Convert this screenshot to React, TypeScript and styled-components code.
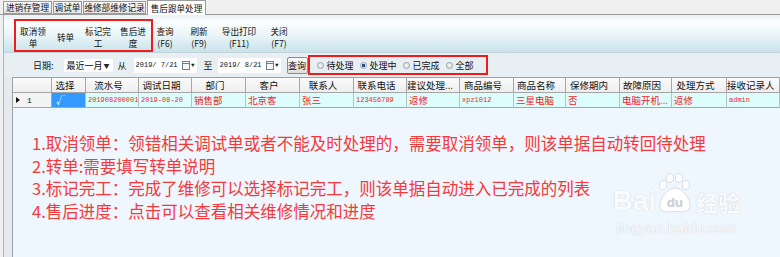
import React from "react";
import styled, { createGlobalStyle } from "styled-components";

const Global = createGlobalStyle`
  html, body { margin: 0; padding: 0; }
  body {
    width: 780px; height: 257px; overflow: hidden;
    background: #eef0f2;
    font-family: "Noto Sans CJK SC", "Liberation Sans", sans-serif;
  }
`;

const Root = styled.div`
  width: 780px; height: 257px;
  display: flex; flex-direction: column;
  overflow: hidden;
`;

const TabBar = styled.div`
  height: 15px; flex: none;
  display: flex; align-items: flex-end;
  padding-left: 3px;
  gap: 1px;
  background: #f0f0f0;
  border-bottom: 1px solid #9a9a9a;
  box-sizing: border-box;
`;

const Tab = styled.div<{ $w: number; $active?: boolean }>`
  width: ${(p) => p.$w}px;
  height: ${(p) => (p.$active ? 15 : 13)}px;
  margin-bottom: ${(p) => (p.$active ? -1 : 0)}px;
  box-sizing: border-box;
  border: 1px solid #9a9a9a;
  border-bottom: ${(p) => (p.$active ? "none" : "1px solid #9a9a9a")};
  background: ${(p) => (p.$active ? "#ffffff" : "linear-gradient(#fafafa, #e4e4e4)")};
  font-size: 8.6px; line-height: 11px;
  color: #111;
  display: flex; align-items: center; justify-content: center;
  white-space: nowrap;
  overflow: hidden;
`;

const Panel = styled.div`
  flex: 1;
  margin-left: 3px;
  border-left: 1px solid #a9b3b9;
  display: flex; flex-direction: column;
  background: #e4eaee;
  min-height: 0;
`;

const Toolbar = styled.div`
  height: 38px; flex: none;
  box-sizing: border-box;
  padding: 4px 0 0 10px;
  display: flex; align-items: stretch;
  background: linear-gradient(#eaeff2 0%, #fbfdfe 18%, #eaf5f8 55%, #c9e2eb 100%);
  border-bottom: 1px solid #c4d4da;
`;

const Group = styled.div`
  width: 139px;
  box-sizing: border-box;
  border: 2px solid #f01c1c;
  display: flex; align-items: stretch;
  gap: 1px;
`;

const ToolButton = styled.div<{ $w: number }>`
  width: ${(p) => p.$w}px; flex: none;
  display: flex; flex-direction: column; align-items: center; justify-content: center;
  padding-top: 3px;
  font-size: 8.6px; line-height: 12.5px;
  color: #111;
  text-align: center;
  white-space: nowrap;
`;

const ToolLine = styled.span`
  display: block;
  height: 12.5px;
`;

const ToolSpacer = styled.div<{ $w: number }>`
  width: ${(p) => p.$w}px; flex: none;
`;

const FilterBar = styled.div`
  height: 24px; flex: none;
  display: flex; align-items: center;
  padding-left: 29px;
  background: #e8eff3;
  font-size: 9px; color: #111;
`;

const Label = styled.span<{ $ml?: number }>`
  margin-left: ${(p) => p.$ml ?? 0}px;
  white-space: nowrap;
`;

const Select = styled.div<{ $ml?: number }>`
  margin-left: ${(p) => p.$ml ?? 0}px;
  width: 51px; height: 15px;
  box-sizing: border-box;
  background: #fff;
  border: 1px solid #e9eef1;
  display: flex; align-items: center; justify-content: space-between;
  padding: 0 3px 0 3px;
  font-size: 9px;
  white-space: nowrap;
`;

const Caret = styled.span`
  font-size: 6px; color: #222;
`;

const DateBox = styled.div<{ $ml?: number }>`
  margin-left: ${(p) => p.$ml ?? 0}px;
  width: 63px; height: 15px;
  box-sizing: border-box;
  background: #fff;
  display: flex; align-items: center; justify-content: space-between;
  padding: 0 2px 0 2px;
  font-family: "Liberation Mono", monospace;
  font-size: 7px;
  white-space: pre;
`;

const CalIcon = styled.span`
  display: inline-flex; align-items: center; gap: 1px;
`;

const QueryButton = styled.div<{ $ml?: number }>`
  margin-left: ${(p) => p.$ml ?? 0}px;
  width: 21px; height: 17px;
  box-sizing: border-box;
  border: 1px solid #8c8c8c;
  border-radius: 2px;
  background: linear-gradient(#fbfbfb, #dedede);
  display: flex; align-items: center; justify-content: center;
  font-size: 9px;
`;

const RadioGroup = styled.div`
  width: 180px; height: 20px;
  box-sizing: border-box;
  border: 2px solid #f01c1c;
  display: flex; align-items: center;
  padding-left: 7px;
  gap: 6px;
`;

const RadioItem = styled.label`
  display: flex; align-items: center; gap: 3px;
  font-size: 9px; white-space: nowrap;
`;

const RadioDot = styled.span<{ $on?: boolean }>`
  width: 7px; height: 7px; border-radius: 50%;
  box-sizing: border-box;
  border: 1px solid #9aa3a8;
  background: ${(p) =>
    p.$on ? "radial-gradient(circle, #2a4a8a 0 1.6px, #e8eef4 2px)" : "radial-gradient(circle, #f6f6f6, #d4d8da)"};
`;

const Grid = styled.div`
  position: relative;
  flex: 1;
  margin-left: 8px;
  border-left: 1px solid #9aa0a4;
  border-top: 1px solid #9aa0a4;
  background: #eef6fe;
  min-height: 0;
  display: flex; flex-direction: column;
`;

const COLS = "39px 34px 53px 53px 54px 54px 54px 53px 53px 54px 52px 54px 52px 55px 1fr";

const Row = styled.div`
  display: grid;
  grid-template-columns: ${COLS};
  height: 15px; flex: none;
`;

const HeadCell = styled.div`
  box-sizing: border-box;
  border-right: 1px solid #a6a6a6;
  border-bottom: 1px solid #a6a6a6;
  background: linear-gradient(#fbfbfb, #eeeeee);
  font-size: 9.5px; line-height: 14px;
  text-align: center;
  padding-right: 7px;
  white-space: nowrap; overflow: hidden;
  color: #111;
`;

const DataCell = styled.div<{ $mono?: boolean; $sel?: boolean }>`
  box-sizing: border-box;
  border-right: 1px solid #b8c4c4;
  border-bottom: 1px solid #a6a6a6;
  background: ${(p) => (p.$sel ? "#3399ff" : "#ddfdfd")};
  color: ${(p) => (p.$sel ? "#ffffff" : "#f02424")};
  font-family: ${(p) => (p.$mono ? '"Liberation Mono", monospace' : '"Noto Sans CJK SC", sans-serif')};
  font-size: ${(p) => (p.$mono ? "7px" : "9.5px")};
  line-height: 14px;
  padding-left: ${(p) => (p.$sel ? 4 : 2)}px;
  white-space: nowrap; overflow: hidden;
`;

const RowHeadCell = styled.div`
  box-sizing: border-box;
  border-right: 1px solid #a6a6a6;
  border-bottom: 1px solid #a6a6a6;
  background: #f3f3f3;
  display: flex; align-items: center;
  padding-left: 3px; gap: 7px;
  font-family: "Liberation Mono", monospace;
  font-size: 8px; color: #111;
`;

const Arrow = styled.span`
  width: 0; height: 0;
  border-top: 3.5px solid transparent;
  border-bottom: 3.5px solid transparent;
  border-left: 4px solid #111;
`;

const Notes = styled.div`
  padding: 24px 0 0 19px;
  display: flex; flex-direction: column;
`;

const Note = styled.div`
  font-family: "Noto Sans CJK SC", sans-serif;
  font-size: 16.5px;
  line-height: 22.5px;
  color: #f5393b;
  white-space: nowrap;
`;

const Watermark = styled.div`
  position: absolute;
  right: 40px; bottom: 21px;
  display: flex; flex-direction: column; align-items: center;
  color: rgba(255, 255, 255, 0.95);
  text-shadow: 0 0 1px rgba(120, 130, 140, 0.45);
  pointer-events: none;
`;

const WmTop = styled.div`
  display: flex; align-items: flex-end;
  font-family: "Liberation Sans", sans-serif;
  font-weight: bold;
  font-size: 28px; line-height: 26px;
`;

const WmCn = styled.span`
  font-family: "Noto Sans CJK SC", sans-serif;
  font-weight: bold;
  font-size: 22px;
  line-height: 26px;
  margin-left: 2px;
`;

const WmUrl = styled.div`
  font-family: "Liberation Sans", sans-serif;
  font-size: 14.5px;
  margin-top: 6px;
  letter-spacing: 0.2px;
`;

const Paw = () => (
  <svg width="36" height="42" viewBox="0 0 36 42" style={{ margin: "0 1px 0 1px" }}>
    <g fill="rgba(255,255,255,0.95)" stroke="rgba(140,150,160,0.35)" strokeWidth="0.8">
      <ellipse cx="6" cy="13" rx="3.5" ry="4.5" />
      <ellipse cx="13" cy="6" rx="3.5" ry="4.5" />
      <ellipse cx="22" cy="6" rx="3.5" ry="4.5" />
      <ellipse cx="29" cy="13" rx="3.5" ry="4.5" />
      <path d="M18 16 C 11 16, 3 26, 3 33 C 3 40, 9 41, 18 39 C 27 41, 33 40, 33 33 C 33 26, 25 16, 18 16 Z" />
    </g>
    <text x="18" y="35" textAnchor="middle" fontFamily="Liberation Sans, sans-serif" fontWeight="bold" fontSize="13" fill="rgba(200,208,215,0.8)">du</text>
  </svg>
);

const Calendar = () => (
  <CalIcon>
    <svg width="8" height="9" viewBox="0 0 8 9">
      <rect x="0.5" y="0.5" width="7" height="8" fill="#f4f6f8" stroke="#6f7f8f" />
      <line x1="0.5" y1="2.5" x2="7.5" y2="2.5" stroke="#6f7f8f" />
    </svg>
    <Caret>▼</Caret>
  </CalIcon>
);

const headers = ["", "选择", "流水号", "调试日期", "部门", "客户", "联系人", "联系电话", "建议处理...", "商品编号", "商品名称", "保修期内", "故障原因", "处理方式", "接收记录人"];

const cells: { t: string; mono?: boolean }[] = [
  { t: "201908200001", mono: true },
  { t: "2019-08-20", mono: true },
  { t: "销售部" },
  { t: "北京客" },
  { t: "张三" },
  { t: "123456789", mono: true },
  { t: "返修" },
  { t: "xpz1012", mono: true },
  { t: "三星电脑" },
  { t: "否" },
  { t: "电脑开机..." },
  { t: "返修" },
  { t: "admin", mono: true },
];

const notes = [
  "1.取消领单：领错相关调试单或者不能及时处理的，需要取消领单，则该单据自动转回待处理",
  "2.转单:需要填写转单说明",
  "3.标记完工：完成了维修可以选择标记完工，则该单据自动进入已完成的列表",
  "4.售后进度：点击可以查看相关维修情况和进度",
];

const tools: { lines: string[]; w: number; gap: number }[] = [
  { lines: ["查询", "(F6)"], w: 22, gap: 1 },
  { lines: ["刷新", "(F9)"], w: 22, gap: 12 },
  { lines: ["导出打印", "(F11)"], w: 46, gap: 6 },
  { lines: ["关闭", "(F7)"], w: 22, gap: 6 },
];

const groupTools: { lines: string[]; w: number }[] = [
  { lines: ["取消领", "单"], w: 34 },
  { lines: ["转单"], w: 29 },
  { lines: ["标记完", "工"], w: 34 },
  { lines: ["售后进", "度"], w: 34 },
];

export default function App() {
  return (
    <Root>
      <Global />
      <TabBar>
        <Tab $w={49}>进销存管理</Tab>
        <Tab $w={29}>调试单</Tab>
        <Tab $w={63}>维修部维修记录</Tab>
        <Tab $w={59} $active>售后跟单处理</Tab>
      </TabBar>
      <Panel>
        <Toolbar>
          <Group>
            {groupTools.map((t) => (
              <ToolButton key={t.lines.join("")} $w={t.w}>
                {t.lines.map((l) => (
                  <ToolLine key={l}>{l}</ToolLine>
                ))}
              </ToolButton>
            ))}
          </Group>
          {tools.map((t) => (
            <React.Fragment key={t.lines.join("")}>
              <ToolSpacer $w={t.gap} />
              <ToolButton $w={t.w}>
                {t.lines.map((l) => (
                  <ToolLine key={l}>{l}</ToolLine>
                ))}
              </ToolButton>
            </React.Fragment>
          ))}
        </Toolbar>
        <FilterBar>
          <Label>日期:</Label>
          <Select $ml={9}><span>最近一月</span><Caret>▼</Caret></Select>
          <Label $ml={4}>从</Label>
          <DateBox $ml={7}><span>2019/ 7/21</span><Calendar /></DateBox>
          <Label $ml={7}>至</Label>
          <DateBox $ml={5}><span>2019/ 8/21</span><Calendar /></DateBox>
          <QueryButton $ml={6}>查询</QueryButton>
          <RadioGroup>
            <RadioItem><RadioDot />待处理</RadioItem>
            <RadioItem><RadioDot $on />处理中</RadioItem>
            <RadioItem><RadioDot />已完成</RadioItem>
            <RadioItem><RadioDot />全部</RadioItem>
          </RadioGroup>
        </FilterBar>
        <Grid>
          <Row>
            {headers.map((h, i) => (
              <HeadCell key={i}>{h}</HeadCell>
            ))}
          </Row>
          <Row>
            <RowHeadCell><Arrow />1</RowHeadCell>
            <DataCell $sel>√</DataCell>
            {cells.map((c, i) => (
              <DataCell key={i} $mono={c.mono}>{c.t}</DataCell>
            ))}
          </Row>
          <Notes>
            {notes.map((n) => (
              <Note key={n}>{n}</Note>
            ))}
          </Notes>
          <Watermark>
            <WmTop>
              <span>Bai</span>
              <Paw />
              <WmCn>经验</WmCn>
            </WmTop>
            <WmUrl>jingyan.baidu.com</WmUrl>
          </Watermark>
        </Grid>
      </Panel>
    </Root>
  );
}
